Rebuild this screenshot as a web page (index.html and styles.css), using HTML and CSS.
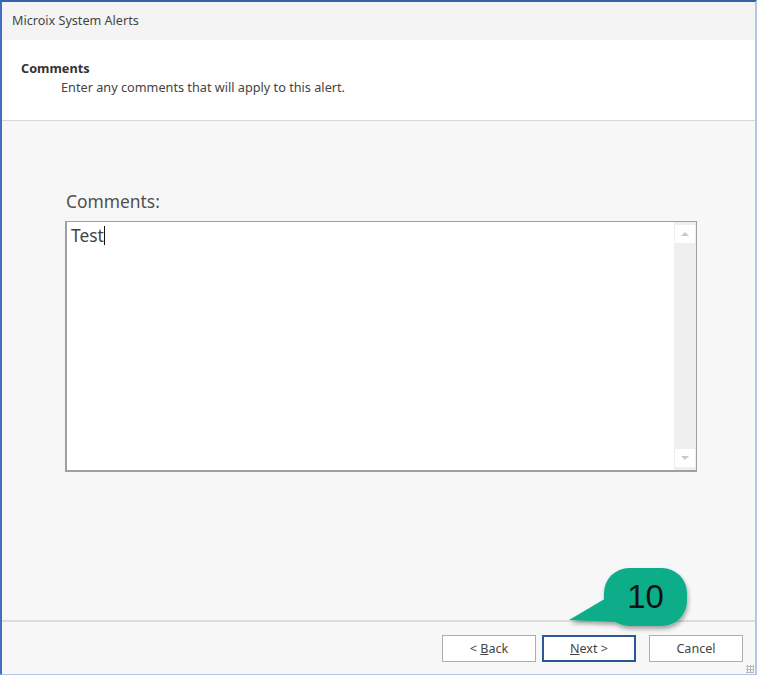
FILE: index.html
```html
<!DOCTYPE html>
<html lang="en">
<head>
    <meta charset="UTF-8">
    <title>Microix System Alerts</title>
    <link rel="stylesheet" href="styles.css">
</head>
<body>
    <div class="ventana">
        <section class="titulo">Microix System Alerts</section>
        <section class="cabecera">
            <p class="cabecera-titulo">Comments</p>
            <p class="cabecera-texto">Enter any comments that will apply to this alert.</p>
        </section>
        <section class="contenido">
            <p class="etiqueta">Comments:</p>
            <div class="caja">
                <div class="caja-texto">Test<span class="cursor"></span></div>
                <div class="scroll">
                    <div class="scroll-btn"><span class="flecha-arriba"></span></div>
                    <div class="scroll-btn"><span class="flecha-abajo"></span></div>
                </div>
            </div>
        </section>
        <section class="pie">
            <button class="boton">&lt; <u>B</u>ack</button>
            <button class="boton activo"><u>N</u>ext &gt;</button>
            <button class="boton cancelar">Cancel</button>
            <span class="grip"></span>
        </section>
        <div class="globo">
            <svg width="135" height="75" viewBox="0 0 135 75">
                <defs>
                    <filter id="sombra" x="-20%" y="-20%" width="140%" height="150%">
                        <feDropShadow dx="1" dy="3" stdDeviation="2" flood-color="#000" flood-opacity="0.35"/>
                    </filter>
                </defs>
                <g filter="url(#sombra)" fill="#10ad8a">
                    <rect x="42" y="6" width="83" height="58" rx="25" ry="25"/>
                    <polygon points="7,58 46,35 54,60"/>
                </g>
            </svg>
            <span class="globo-num">10</span>
        </div>
    </div>
</body>
</html>
```

FILE: styles.css
```css
body{
    margin: 0;
    font-family: "Noto Sans", "Open Sans", sans-serif;
    color: #333;
}
.ventana{
    position: relative;
    width: 757px;
    height: 675px;
    box-sizing: border-box;
    border-top: 2px solid #3562a8;
    border-left: 2px solid #3f70bf;
    border-right: 2px solid #b3c6e6;
    border-bottom: 1px solid #b3c6e6;
    display: flex;
    flex-direction: column;
    background: #f7f7f7;
}
.titulo{
    height: 38px;
    background: #f4f4f4;
    font-size: 12.6px;
    line-height: 38px;
    padding-left: 10px;
    color: #444;
}
.cabecera{
    height: 81px;
    background: #fff;
    border-bottom: 1px solid #d8d8d8;
    box-sizing: border-box;
    padding: 19px 0 0 19px;
}
.cabecera p{
    margin: 0;
    font-size: 12.7px;
}
.cabecera-titulo{
    font-weight: bold;
    color: #333;
    line-height: 19px;
}
.cabecera-texto{
    padding-left: 40px;
    line-height: 19px;
    color: #444;
}
.contenido{
    flex: 1;
    padding: 68px 0 0 63px;
}
.etiqueta{
    margin: 0 0 8px 1px;
    font-size: 17.4px;
    line-height: 24px;
    color: #505050;
}
.caja{
    width: 632px;
    height: 251px;
    box-sizing: border-box;
    border: 1px solid #a0a0a0;
    border-left-width: 2px;
    border-bottom-width: 2px;
    background: #fff;
    display: flex;
}
.caja-texto{
    flex: 1;
    padding: 1px 4px;
    font-size: 17.4px;
    line-height: 24px;
    color: #444;
}
.cursor{
    display: inline-block;
    width: 1px;
    height: 19px;
    background: #111;
    vertical-align: -3px;
}
.scroll{
    width: 20px;
    background: #efefef;
    display: flex;
    flex-direction: column;
    justify-content: space-between;
    padding: 3px 1px;
}
.scroll-btn{
    height: 18px;
    background: #fff;
    display: flex;
    align-items: center;
    justify-content: center;
}
.flecha-arriba{
    border-left: 4px solid transparent;
    border-right: 4px solid transparent;
    border-bottom: 4px solid #c8c8c8;
}
.flecha-abajo{
    border-left: 4px solid transparent;
    border-right: 4px solid transparent;
    border-top: 4px solid #c8c8c8;
}
.pie{
    position: relative;
    height: 54px;
    box-sizing: border-box;
    border-top: 2px solid #dcdcdc;
    display: flex;
    justify-content: flex-end;
    align-items: flex-start;
    padding: 13px 12px 0 0;
}
.boton{
    width: 94px;
    height: 27px;
    margin-left: 6px;
    background: #fff;
    border: 1px solid #adadad;
    font-family: inherit;
    font-size: 12.6px;
    color: #444;
    padding: 0;
}
.activo{
    border: 2px solid #2b5797;
}
.cancelar{
    margin-left: 13px;
}
.grip{
    position: absolute;
    right: 1px;
    bottom: 1px;
    width: 8px;
    height: 8px;
    background: radial-gradient(circle, #b8b8b8 1px, transparent 1.2px) 0 0 / 3px 3px;
}
.globo{
    position: absolute;
    left: 560px;
    top: 560px;
    width: 135px;
    height: 75px;
}
.globo svg{
    display: block;
}
.globo-num{
    position: absolute;
    left: 42px;
    top: 6px;
    width: 83px;
    text-align: center;
    font-family: "Liberation Sans", Arial, sans-serif;
    font-size: 33px;
    line-height: 58px;
    color: #111;
}
```
